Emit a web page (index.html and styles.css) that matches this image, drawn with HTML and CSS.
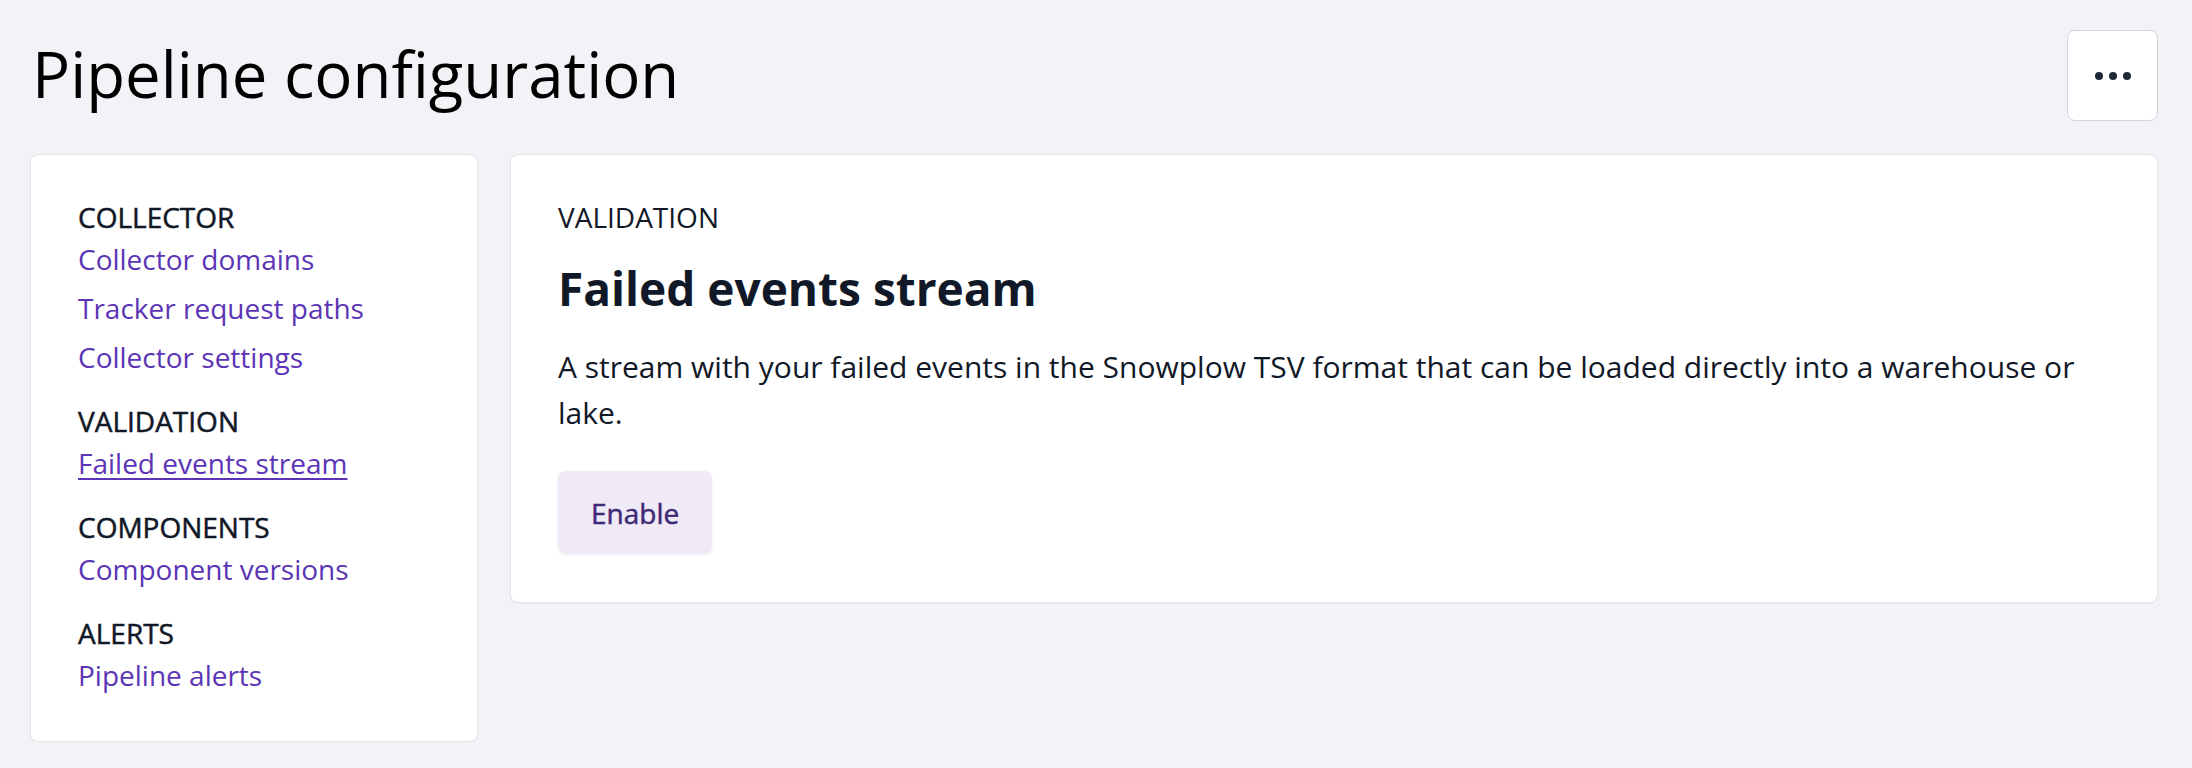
FILE: index.html
```html
<!DOCTYPE html>
<html lang="en">
<head>
<meta charset="utf-8">
<title>Pipeline configuration</title>
<link rel="stylesheet" href="styles.css">
</head>
<body>
<div class="page">
  <header class="page-header">
    <h1 class="page-title">Pipeline configuration</h1>
    <button class="more-btn" aria-label="More">
      <svg width="36" height="10" viewBox="0 0 36 10"><circle cx="4" cy="5" r="4"/><circle cx="18" cy="5" r="4"/><circle cx="32" cy="5" r="4"/></svg>
    </button>
  </header>
  <div class="layout">
    <nav class="card sidebar">
      <div class="nav-section">
        <div class="nav-heading">COLLECTOR</div>
        <a class="nav-link" href="#">Collector domains</a>
        <a class="nav-link" href="#">Tracker request paths</a>
        <a class="nav-link" href="#">Collector settings</a>
      </div>
      <div class="nav-section">
        <div class="nav-heading">VALIDATION</div>
        <a class="nav-link active" href="#">Failed events stream</a>
      </div>
      <div class="nav-section">
        <div class="nav-heading">COMPONENTS</div>
        <a class="nav-link" href="#">Component versions</a>
      </div>
      <div class="nav-section">
        <div class="nav-heading">ALERTS</div>
        <a class="nav-link" href="#">Pipeline alerts</a>
      </div>
    </nav>
    <main class="card content">
      <div class="eyebrow">VALIDATION</div>
      <h2 class="content-title">Failed events stream</h2>
      <p class="content-text">A stream with your failed events in the Snowplow TSV format that can be loaded directly into a warehouse or lake.</p>
      <button class="enable-btn">Enable</button>
    </main>
  </div>
</div>
</body>
</html>
```
FILE: styles.css
```css
* { box-sizing: border-box; }
html, body { margin: 0; padding: 0; }
body {
  background: #f2f3f7;
  font-family: "Open Sans", Roboto, "Liberation Sans", sans-serif;
  color: #111827;
}
.page {
  padding: 30px 34px 0 30px;
}
.page-header {
  display: flex;
  align-items: center;
  justify-content: space-between;
  height: 91px;
}
.page-title {
  margin: 0 0 4px;
  font-size: 63.5px;
  font-weight: 400;
  color: #000;
  line-height: 1;
  padding-left: 2px;
}
.more-btn {
  width: 91px;
  height: 91px;
  background: #fff;
  border: 1px solid #d1d5db;
  border-radius: 8px;
  display: flex;
  align-items: center;
  justify-content: center;
  padding: 0;
  fill: #1f2937;
}
.layout {
  display: flex;
  align-items: flex-start;
  gap: 32px;
  margin-top: 33px;
}
.card {
  background: #fff;
  border: 1px solid #e3e5ea;
  border-radius: 8px;
  box-shadow: 0 1px 2px rgba(0,0,0,0.04);
}
.sidebar {
  width: 448px;
  flex: none;
  padding: 42px 47px 46px;
  display: flex;
  flex-direction: column;
  gap: 24px;
}
.nav-section {
  display: flex;
  flex-direction: column;
}
.nav-heading {
  font-size: 28px;
  line-height: 40px;
  font-weight: 400;
  -webkit-text-stroke: 0.5px currentColor;
  color: #111827;
  margin-bottom: 2px;
}
.nav-link {
  font-size: 28px;
  line-height: 40px;
  color: #5b35b5;
  text-decoration: none;
}
.nav-link + .nav-link { margin-top: 9px; }
.nav-link.active {
  text-decoration: underline;
  text-underline-offset: 4px;
  text-decoration-thickness: 2px;
}
.content {
  flex: 1;
  padding: 42px 47px 48px;
}
.eyebrow {
  font-size: 28px;
  line-height: 40px;
  font-weight: 400;
  color: #111827;
}
.content-title {
  margin: 23px 0 0;
  font-size: 46px;
  line-height: 56px;
  font-weight: 700;
  color: #111827;
}
.content-text {
  margin: 28px 0 0;
  font-size: 30px;
  line-height: 46px;
  color: #111827;
}
.enable-btn {
  margin-top: 35px;
  height: 83px;
  padding: 0 33px;
  border: none;
  border-radius: 8px;
  background: #efeaf6;
  color: #3f2a78;
  font-family: inherit;
  font-size: 28px;
  font-weight: 400;
  -webkit-text-stroke: 0.5px currentColor;
  box-shadow: 0 1px 3px rgba(0,0,0,0.08);
}
```
